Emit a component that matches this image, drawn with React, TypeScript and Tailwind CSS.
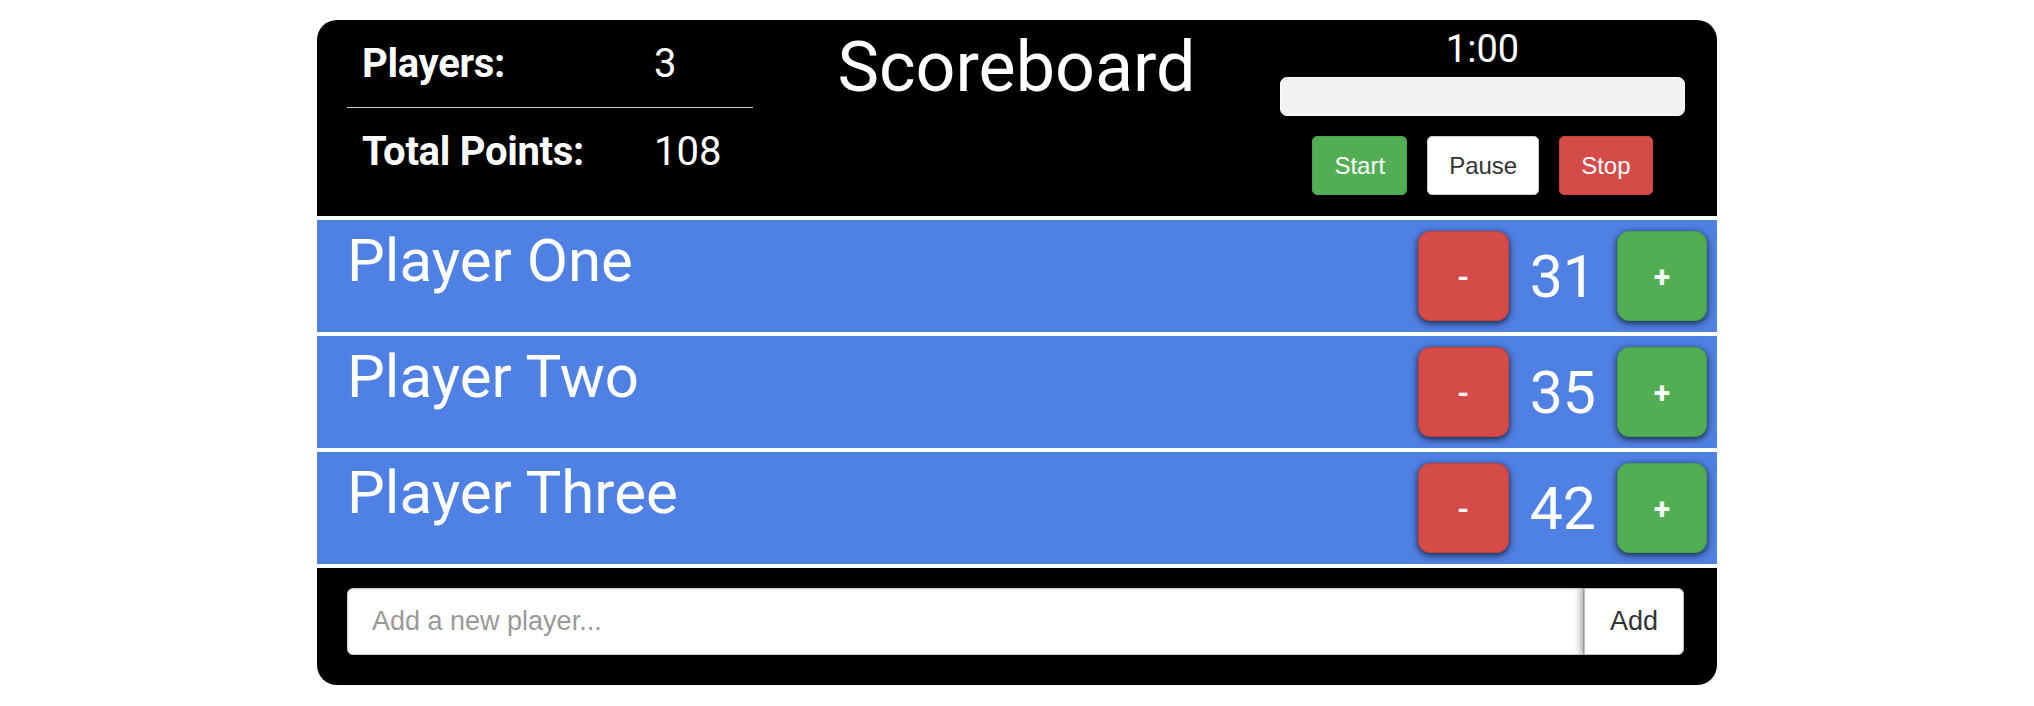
import React from 'react';

const players = [
  { name: 'Player One', score: 31 },
  { name: 'Player Two', score: 35 },
  { name: 'Player Three', score: 42 },
];

const roboto = "font-['Roboto',sans-serif]";
const helv = "font-['Liberation_Sans',Arial,sans-serif]";

const StatRow: React.FC<{ label: string; value: string; border?: boolean }> = ({ label, value, border }) => (
  <div className={`flex items-center h-[88px] ${border ? 'border-b border-[#cfcfcf]' : ''}`}>
    <span className="w-[307px] pl-[15px] font-bold text-[40px] tracking-[-0.3px]">{label}</span>
    <span className="text-[40px]">{value}</span>
  </div>
);

const PlayerRow: React.FC<{ name: string; score: number }> = ({ name, score }) => (
  <div className="border-t-4 border-white bg-[#4f80e3] h-[116px] flex justify-between">
    <div className="pl-[30px] pt-[6px] text-[60px] leading-[70px] text-white">{name}</div>
    <div className="flex items-center pr-[10px]">
      <button className="w-[91px] h-[90px] rounded-[12px] bg-[#d44b47] border border-[#c63f3b] text-white text-[30px] font-bold shadow-[0_2px_7px_rgba(0,0,0,0.75)]">
        -
      </button>
      <span className="mx-[21px] text-[59px] leading-none text-white">{score}</span>
      <button className="w-[90px] h-[90px] rounded-[12px] bg-[#51ae52] border border-[#47a047] text-white text-[30px] font-bold shadow-[0_2px_7px_rgba(0,0,0,0.75)]">
        +
      </button>
    </div>
  </div>
);

export default function App() {
  return (
    <div className={`min-h-screen bg-white pt-[20px] ${roboto}`}>
      <div className="w-[1400px] mx-auto rounded-[20px] overflow-hidden bg-black text-white">
        {/* header */}
        <div className="h-[196px] flex">
          <div className="w-[436px] pl-[30px]">
            <StatRow label="Players:" value="3" border />
            <StatRow label="Total Points:" value="108" />
          </div>
          <div className="flex-1 text-center pt-[7px] text-[70px] leading-[80px]">Scoreboard</div>
          <div className="w-[437px] pr-[32px] flex flex-col items-center pt-[9px]">
            <div className="text-[38px] leading-[40px]">1:00</div>
            <div className="mt-[8px] w-[405px] h-[39px] rounded-[7px] bg-[#f2f2f2] border border-[#fbfbfb]"></div>
            <div className={`mt-[20px] flex gap-[20px] ${helv} text-[24px]`}>
              <button className="h-[59px] px-[21px] rounded-[5px] bg-[#51ae52] border border-[#4aa64a] text-white">Start</button>
              <button className="h-[59px] px-[21px] rounded-[5px] bg-white border border-[#cccccc] text-[#333]">Pause</button>
              <button className="h-[59px] px-[21px] rounded-[5px] bg-[#d44b47] border border-[#c9403c] text-white">Stop</button>
            </div>
          </div>
        </div>

        {players.map((p) => (
          <PlayerRow key={p.name} name={p.name} score={p.score} />
        ))}

        {/* add player */}
        <div className="border-t-4 border-white pt-[20px] pb-[30px] pl-[30px] pr-[33px]">
          <form className={`flex h-[67px] ${helv}`} onSubmit={(e) => e.preventDefault()}>
            <input
              className="flex-1 min-w-0 h-full rounded-l-[6px] bg-white border border-[#cccccc] px-[24px] text-[27px] text-[#333] placeholder:text-[#999] shadow-[inset_0_1px_2px_rgba(0,0,0,0.08)] outline-none"
              placeholder="Add a new player..."
            />
            <button className="w-[100px] h-full rounded-r-[6px] bg-white border border-[#bdbdbd] text-[27px] text-[#333] shadow-[-4px_0_6px_rgba(0,0,0,0.3)]">
              Add
            </button>
          </form>
        </div>
      </div>
    </div>
  );
}
